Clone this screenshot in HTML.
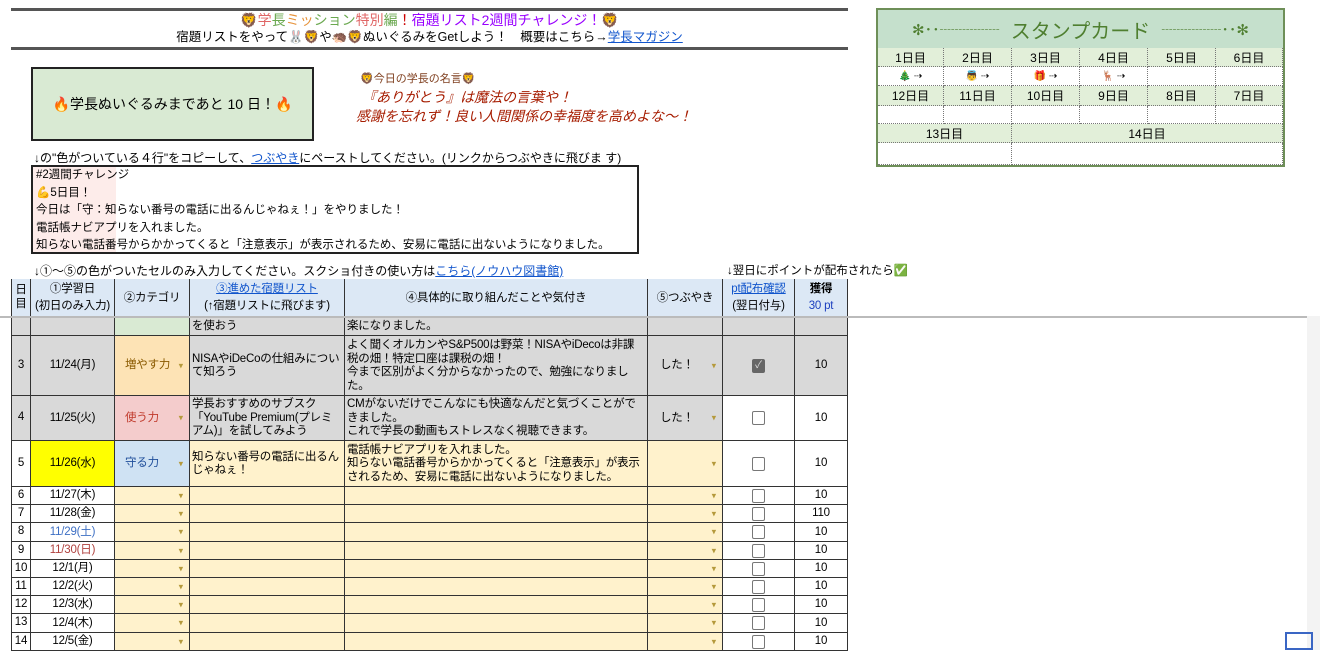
<!DOCTYPE html><html><head><meta charset="utf-8"><style>
body{margin:0;width:1320px;height:650px;overflow:hidden;background:#fff;font-family:"Liberation Sans","Noto Sans CJK JP",sans-serif;font-size:12px;color:#000;position:relative}
.a{position:absolute}
.c{position:absolute;box-sizing:border-box;border-right:1px solid #333;border-bottom:1px solid #333;display:flex;align-items:center;overflow:hidden;line-height:13.5px;padding:1px 2px 0;font-size:11.5px;letter-spacing:-0.2px}
.c>div{width:100%}
.ctr{justify-content:center;text-align:center}
.dd::after{content:"▾";position:absolute;right:6px;top:50%;transform:translateY(-50%);color:#b59a3c;font-size:9px}
.cb{width:11px;height:12px;border:1.5px solid #777;border-radius:2px;background:#fff;margin:0 auto;display:block}
.sc{position:absolute;box-sizing:border-box;border-right:1px dotted #777;border-bottom:1px dotted #777;display:flex;align-items:center;justify-content:center;font-size:12px}
a{color:#1155cc;text-decoration:underline}
</style></head><body>
<div class="a" style="left:11px;top:8px;width:837px;height:3px;background:#555"></div>
<div class="a" style="left:11px;top:47px;width:837px;height:3px;background:#555"></div>
<div class="a" style="left:11px;top:12px;width:837px;text-align:center;font-size:14px;line-height:17px"><span style="color:#e69138">🦁</span><span style="color:#e06666">学</span><span style="color:#6aa84f">長</span><span style="color:#e69138">ミッ</span><span style="color:#6aa84f">ション</span><span style="color:#e06666">特別</span><span style="color:#6aa84f">編</span><span style="color:#cc0000">！</span><span style="color:#9900ff">宿題リスト2週間チャレンジ！</span>🦁</div>
<div class="a" style="left:11px;top:29px;width:837px;text-align:center;font-size:12.5px;line-height:16px">宿題リストをやって🐰🦁や🦔🦁ぬいぐるみをGetしよう！　概要はこちら→<a>学長マガジン</a></div>
<div class="a" style="left:31px;top:67px;width:283px;height:74px;box-sizing:border-box;border:2px solid #222;background:#d9ead3;display:flex;align-items:center;justify-content:center;font-size:14px">🔥学長ぬいぐるみまであと 10 日！🔥</div>
<div class="a" style="left:360px;top:70px;font-size:11px;color:#7f3f1f">🦁今日の学長の名言🦁</div>
<div class="a" style="left:362px;top:88px;font-size:14px;line-height:19px;color:#a61c00;font-style:italic">『ありがとう』は魔法の言葉や！<br><span style="margin-left:-6px">感謝を忘れず！良い人間関係の幸福度を高めよな～！</span></div>
<div class="a" style="left:34px;top:149px;font-size:12px">↓の"色がついている４行"をコピーして、<a>つぶやき</a>にペーストしてください。(リンクからつぶやきに飛びま す)</div>
<div class="a" style="left:31px;top:165px;width:608px;height:89px;box-sizing:border-box;border:2px solid #222;font-size:11.5px;line-height:17.5px;padding:0 3px">
<div style="position:absolute;left:0;top:0;width:83px;height:85px;background:#fdecea;z-index:-1"></div>
#2週間チャレンジ<br>💪5日目！<br>今日は「守：知らない番号の電話に出るんじゃねぇ！」をやりました！<br><span style="line-height:14px">電話帳ナビアプリを入れました。<br>知らない電話番号からかかってくると「注意表示」が表示されるため、安易に電話に出ないようになりました。</span></div>
<div class="a" style="left:34px;top:262px;font-size:12px">↓①～⑤の色がついたセルのみ入力してください。スクショ付きの使い方は<a>こちら(ノウハウ図書館)</a></div>
<div class="a" style="left:727px;top:262px;font-size:11.5px">↓翌日にポイントが配布されたら✅</div>

<div class="a" style="left:876px;top:8px;width:409px;height:159px;box-sizing:border-box;border:2px solid #6e8f58;background:#fff">
<div class="a" style="left:0;top:0;width:405px;height:38px;background:#c5e0cc;border-bottom:2px solid #6e8f58;color:#4f7f30;font-size:20px;display:flex;align-items:center;justify-content:center"><span style="position:absolute;left:34px;font-size:15px">✻･･┈┈┈┈</span>スタンプカード<span style="position:absolute;right:34px;font-size:15px">┈┈┈┈･･✻</span></div>
</div>
<div id="st"></div>

<div class="a" style="left:11px;top:279px;width:837px;height:38px;border-top:1px solid #333;border-left:1px solid #333;box-sizing:border-box"></div>
<div id="t"></div>
<div class="a" style="left:0;top:316px;width:1320px;height:2px;background:#bbb"></div>
<div class="a" style="left:1307px;top:316px;width:13px;height:334px;background:#f3f3f3"></div>
<div class="a" style="left:1285px;top:632px;width:28px;height:18px;box-sizing:border-box;border:2px solid #3a66c4"></div>
<script>
var X=[11,31,115,190,345,648,723,795,848];
var h='';
function cell(x1,x2,y1,y2,bg,html,cls,st){h+='<div class="c '+(cls||'')+'" style="left:'+x1+'px;top:'+y1+'px;width:'+(x2-x1)+'px;height:'+(y2-y1)+'px;background:'+bg+';'+(st||'')+'"><div>'+html+'</div></div>';}
var hb='#dce8f5';
var hd=['<span style="line-height:13px">日<br>目</span>','①学習日<br>(初日のみ入力)','②カテゴリ','<a>③進めた宿題リスト</a><br>(↑宿題リストに飛びます)','④具体的に取り組んだことや気付き','⑤つぶやき','<a>pt配布確認</a><br>(翌日付与)','<b>獲得</b><br><span style="color:#1c3fbf">30 pt</span>'];
for(var i=0;i<8;i++)cell(X[i],X[i+1],279,317,hb,hd[i],'ctr',i==0?'border-left:1px solid #333;padding:0':'line-height:17px');
var g='#d9d9d9',y='#fff2cc';
var r=[318,336];
cell(11,31,r[0],r[1],g,'','ctr','border-left:1px solid #333');cell(31,115,r[0],r[1],g,'');cell(115,190,r[0],r[1],'#d9ead3','');cell(190,345,r[0],r[1],g,'を使おう');cell(345,648,r[0],r[1],g,'楽になりました。');cell(648,723,r[0],r[1],g,'');cell(723,795,r[0],r[1],g,'');cell(795,848,r[0],r[1],g,'');
function row(y1,y2,n,d,dbg,cat,cbg,catc,c3,c3bg,c4,c4bg,tw,twbg,cbx,cbxbg,pbg,dc){
cell(11,31,y1,y2,n>=3&&n<=4?g:'#fff',n,'ctr','border-left:1px solid #333;padding:0');
cell(31,115,y1,y2,dbg,'<span style="color:'+(dc||'#000')+'">'+d+'</span>','ctr');
cell(115,190,y1,y2,cbg,'<span style="color:'+catc+';margin-left:8px">'+cat+'</span>','dd');
cell(190,345,y1,y2,c3bg,c3);cell(345,648,y1,y2,c4bg,c4);
cell(648,723,y1,y2,twbg,tw?'<span style="margin-left:10px">'+tw+'</span>':'','dd');
cell(723,795,y1,y2,cbxbg,cbx,'ctr','padding:0');cell(795,848,y1,y2,pbg,n==7?'110':'10','ctr');}
var chk='<div class="cb" style="background:#666;border-color:#666;color:#ddd;font-size:10px;line-height:12px;text-align:center">✓</div>',ub='<div class="cb"></div>';
row(336,396,3,'11/24(月)',g,'増やす力','#fde3b5','#8a5a00','NISAやiDeCoの仕組みについて知ろう',g,'よく聞くオルカンやS&amp;P500は野菜！NISAやiDecoは非課税の畑！特定口座は課税の畑！<br>今まで区別がよく分からなかったので、勉強になりました。',g,'した！',g,chk,g,g);
row(396,441,4,'11/25(火)',g,'使う力','#f4cccc','#c0392b','学長おすすめのサブスク「YouTube Premium(プレミアム)」を試してみよう',g,'CMがないだけでこんなにも快適なんだと気づくことができました。<br>これで学長の動画もストレスなく視聴できます。',g,'した！',g,ub,'#fff','#fff');
row(441,487,5,'11/26(水)','#ffff00','守る力','#cfe2f3','#1f4e9a','知らない番号の電話に出るんじゃねぇ！',y,'電話帳ナビアプリを入れました。<br>知らない電話番号からかかってくると「注意表示」が表示されるため、安易に電話に出ないようになりました。',y,'',y,ub,'#fff','#fff');
var ds=['11/27(木)','11/28(金)','11/29(土)','11/30(日)','12/1(月)','12/2(火)','12/3(水)','12/4(木)','12/5(金)'];
for(var k=0;k<9;k++){var y1=487+k*18.2;row(Math.round(y1),Math.round(y1+18.2),6+k,ds[k],'#fff','',y,'#000','',y,'',y,'',y,ub,'#fff','#fff',k==2?'#3d6fc4':k==3?'#b0413e':'');}
document.getElementById('t').outerHTML=h;
var s='',SX=[878,944,1012,1080,1148,1216,1283];
function sc(x1,x2,y1,y2,bg,t){s+='<div class="sc" style="left:'+x1+'px;top:'+y1+'px;width:'+(x2-x1)+'px;height:'+(y2-y1)+'px;background:'+bg+'">'+t+'</div>';}
var e=['🎄 ⇢','👼 ⇢','🎁 ⇢','🦌 ⇢','',''];
for(var i=0;i<6;i++){sc(SX[i],SX[i+1],48,67,'#e2efd9',(i+1)+'日目');sc(SX[i],SX[i+1],67,86,'#fff','<span style="font-size:10px">'+e[i]+'</span>');sc(SX[i],SX[i+1],86,106,'#e2efd9',(12-i)+'日目');sc(SX[i],SX[i+1],106,124,'#fff','');}
sc(878,1012,124,143,'#e2efd9','13日目');sc(1012,1283,124,143,'#e2efd9','14日目');sc(878,1012,143,165,'#fff','');sc(1012,1283,143,165,'#fff','');
document.getElementById('st').outerHTML=s;
</script>
</body></html>
